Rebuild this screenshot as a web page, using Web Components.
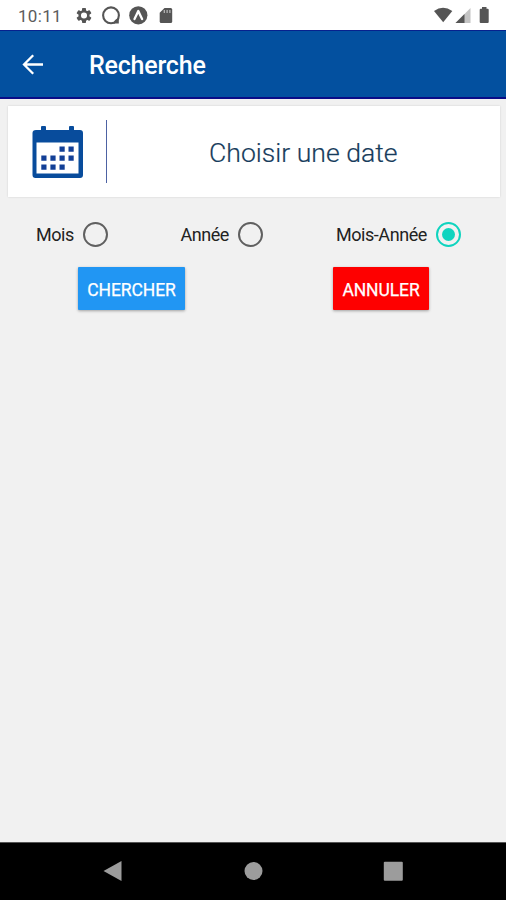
<!DOCTYPE html>
<html lang="fr"><head><meta charset="utf-8"><title>Recherche</title>
<style>html,body{margin:0;height:100%}body{font-family:Roboto,"Liberation Sans",sans-serif;overflow:hidden}</style></head>
<body><search-screen></search-screen>
<script>
const define = (name, html) => customElements.define(name, class extends HTMLElement {
  constructor() {
    super();
    this.attachShadow({ mode: 'open' }).innerHTML = html;
  }
});

define('status-bar', `<style>
:host{display:flex;box-sizing:border-box;height:30px;background:#fff;color:#555;padding:0 15px 0 18px;justify-content:space-between}
.time{font-size:17px;line-height:32px;letter-spacing:.3px;width:58px;color:#5c5c5c}
.left{display:flex}svg{display:block}
</style>
<div class="left"><span class="time">10:11</span>
<svg width="100" height="30" viewBox="76 0 100 30">
<g transform="translate(84 15.5)"><g fill="#555"><rect x="-2" y="-7.6" width="4" height="15.2" rx=".8"/><rect x="-2" y="-7.6" width="4" height="15.2" rx=".8" transform="rotate(60)"/><rect x="-2" y="-7.6" width="4" height="15.2" rx=".8" transform="rotate(120)"/></g><circle r="4.3" fill="#fff" stroke="#555" stroke-width="2.5"/></g>
<circle cx="111" cy="15.3" r="7.9" fill="none" stroke="#555" stroke-width="2.1"/><path d="M115 20l3.8-2v5.4h-5.3z" fill="#555"/>
<circle cx="138.300" cy="15.300" r="9.100" fill="#555"/><path d="M134.500 19Q137 14 138.300 11Q139.600 14 142.100 19" fill="none" stroke="#fff" stroke-width="2.300" stroke-linejoin="round" stroke-linecap="round"/>
<path d="M164.500 8h6.200q1.500 0 1.500 1.500v12q0 1.500-1.500 1.500h-9.500q-1.500 0-1.500-1.500V12.800z" fill="#555"/><path d="M164.300 10v3M167.100 10v3M169.900 10v3" stroke="#bbb" stroke-width="1.200"/>
</svg></div>
<svg width="60" height="30" viewBox="431 0 60 30"><path d="M434 11Q443 4.500 452.300 11L443.200 22.300z" fill="#555"/><path d="M470.500 8v15H455.500z" fill="#c4c4c4"/><path d="M464.500 14v9H455.500z" fill="#555"/><path d="M482 8.700V7h4.500v1.700h1.200q1 0 1 1v12.300q0 1-1 1h-7q-1 0-1-1V9.700q0-1 1-1z" fill="#555"/></svg>`);

define('app-bar', `<style>
:host{display:flex;align-items:center;box-sizing:border-box;height:69px;background:#03509f;border-top:1px solid #06218e;border-bottom:2px solid #0a0c87;color:#fff;padding-left:22px}
svg{display:block;width:22px;height:22px;margin-right:45px}
h1{margin:4px 0 0;font-size:25px;font-weight:500;line-height:30px;letter-spacing:-.2px}
</style><svg viewBox="0 0 22 22" fill="none" stroke="#fff" stroke-width="2.300"><path d="M21 11.500H2.500M11.200 2.200L2 11.500l9.200 9.300"/></svg><h1><slot></slot></h1>`);

define('calendar-icon', `<style>:host{display:block;width:52px;height:53px;margin-top:1px}svg{display:block}</style>
<svg width="52" height="53" viewBox="0 0 52 53"><path d="M4 4h5V1q0-1 1-1h3q1 0 1 1v3h23V1q0-1 1-1h3q1 0 1 1v3h6q3 0 3 3v42q0 3-3 3H3.500q-3 0-3-3V7q0-3 3.500-3z" fill="#084c9c"/><path d="M4.500 16.500h42v31h-42z" fill="#fff"/><path fill="#123f96" d="M27.500 20.500h5.200v5.200h-5.200zM36.500 20.500h5.200v5.200h-5.200zM9.300 29.500h5.200v5.200h-5.200zM18.400 29.500h5.200v5.200h-5.200zM27.500 29.500h5.200v5.200h-5.200zM36.500 29.500h5.200v5.200h-5.200zM9.300 38.600h5.200v5.200h-5.200zM18.400 38.600h5.200v5.200h-5.200zM27.500 38.600h5.200v5.200h-5.200z"/></svg>`);

define('date-card', `<style>
:host{display:flex;align-items:center;box-sizing:border-box;height:91px;margin:7px 6.500px 0 8px;background:#fff;padding-left:23.500px;box-shadow:0 0 2px #0002}
.line{width:1px;height:63px;margin:0 0 0 22.500px;background:#4d62a3}
.text{flex:1;text-align:center;font-size:26.600px;line-height:32px;font-weight:300;color:#173c5c;padding-top:2px;-webkit-text-stroke:.2px #173c5c}
</style><calendar-icon></calendar-icon><div class="line"></div><div class="text"><slot></slot></div>`);

define('radio-option', `<style>
:host{display:flex;align-items:center;gap:9.500px;font-size:18px;letter-spacing:-.45px;line-height:24px;color:#222}
i{box-sizing:border-box;display:grid;place-items:center;width:25px;height:25px;border:2px solid #606060;border-radius:50%}
span{padding-top:1px}
:host([checked]) i{border-color:#0fd4bf}
:host([checked]) i::after{content:"";width:13px;height:13px;border-radius:50%;background:#0fd4bf}
</style><span><slot></slot></span><i></i>`);

define('action-button', `<style>
:host{display:flex;align-items:center;justify-content:center;box-sizing:border-box;height:43px;border-radius:1px;background:var(--fill);color:#fff;font-size:17.500px;letter-spacing:-.1px;font-weight:400;box-shadow:0 1px 3px #0005;-webkit-text-stroke:.25px #fff;padding-top:2px}
</style><slot></slot>`);

define('nav-bar', `<style>
:host{display:flex;align-items:center;justify-content:space-between;box-sizing:border-box;height:58px;background:#000;border-top:1px solid #555;padding:0 103px 2px 102.500px}svg{display:block}
</style><svg width="20" height="22"><path d="M.5 11L18.500 1v20z" fill="#9c9c9c"/></svg><svg width="20" height="20"><circle cx="10.500" cy="10" r="9" fill="#9c9c9c"/></svg><svg width="20" height="20"><rect x=".8" y=".7" width="19" height="19" rx="1" fill="#9c9c9c"/></svg>`);

define('search-screen', `<style>
:host{display:flex;flex-direction:column;width:506px;height:900px;background:#f1f1f1}
main{flex:1;display:flex;flex-direction:column}
.options{display:grid;grid-template-columns:144.500px 155.500px auto;padding-left:36px;margin-top:25px}
.actions{display:flex;margin-top:20px;padding-left:78px;gap:148px}
.actions :first-child{width:107px;--fill:#2196f3}.actions :last-child{width:96px;--fill:#fe0000}
</style><status-bar></status-bar><app-bar>Recherche</app-bar>
<main><date-card>Choisir une date</date-card>
<div class="options"><radio-option>Mois</radio-option><radio-option>Année</radio-option><radio-option checked>Mois-Année</radio-option></div>
<div class="actions"><action-button>CHERCHER</action-button><action-button>ANNULER</action-button></div></main>
<nav-bar></nav-bar>`);
</script></body></html>
